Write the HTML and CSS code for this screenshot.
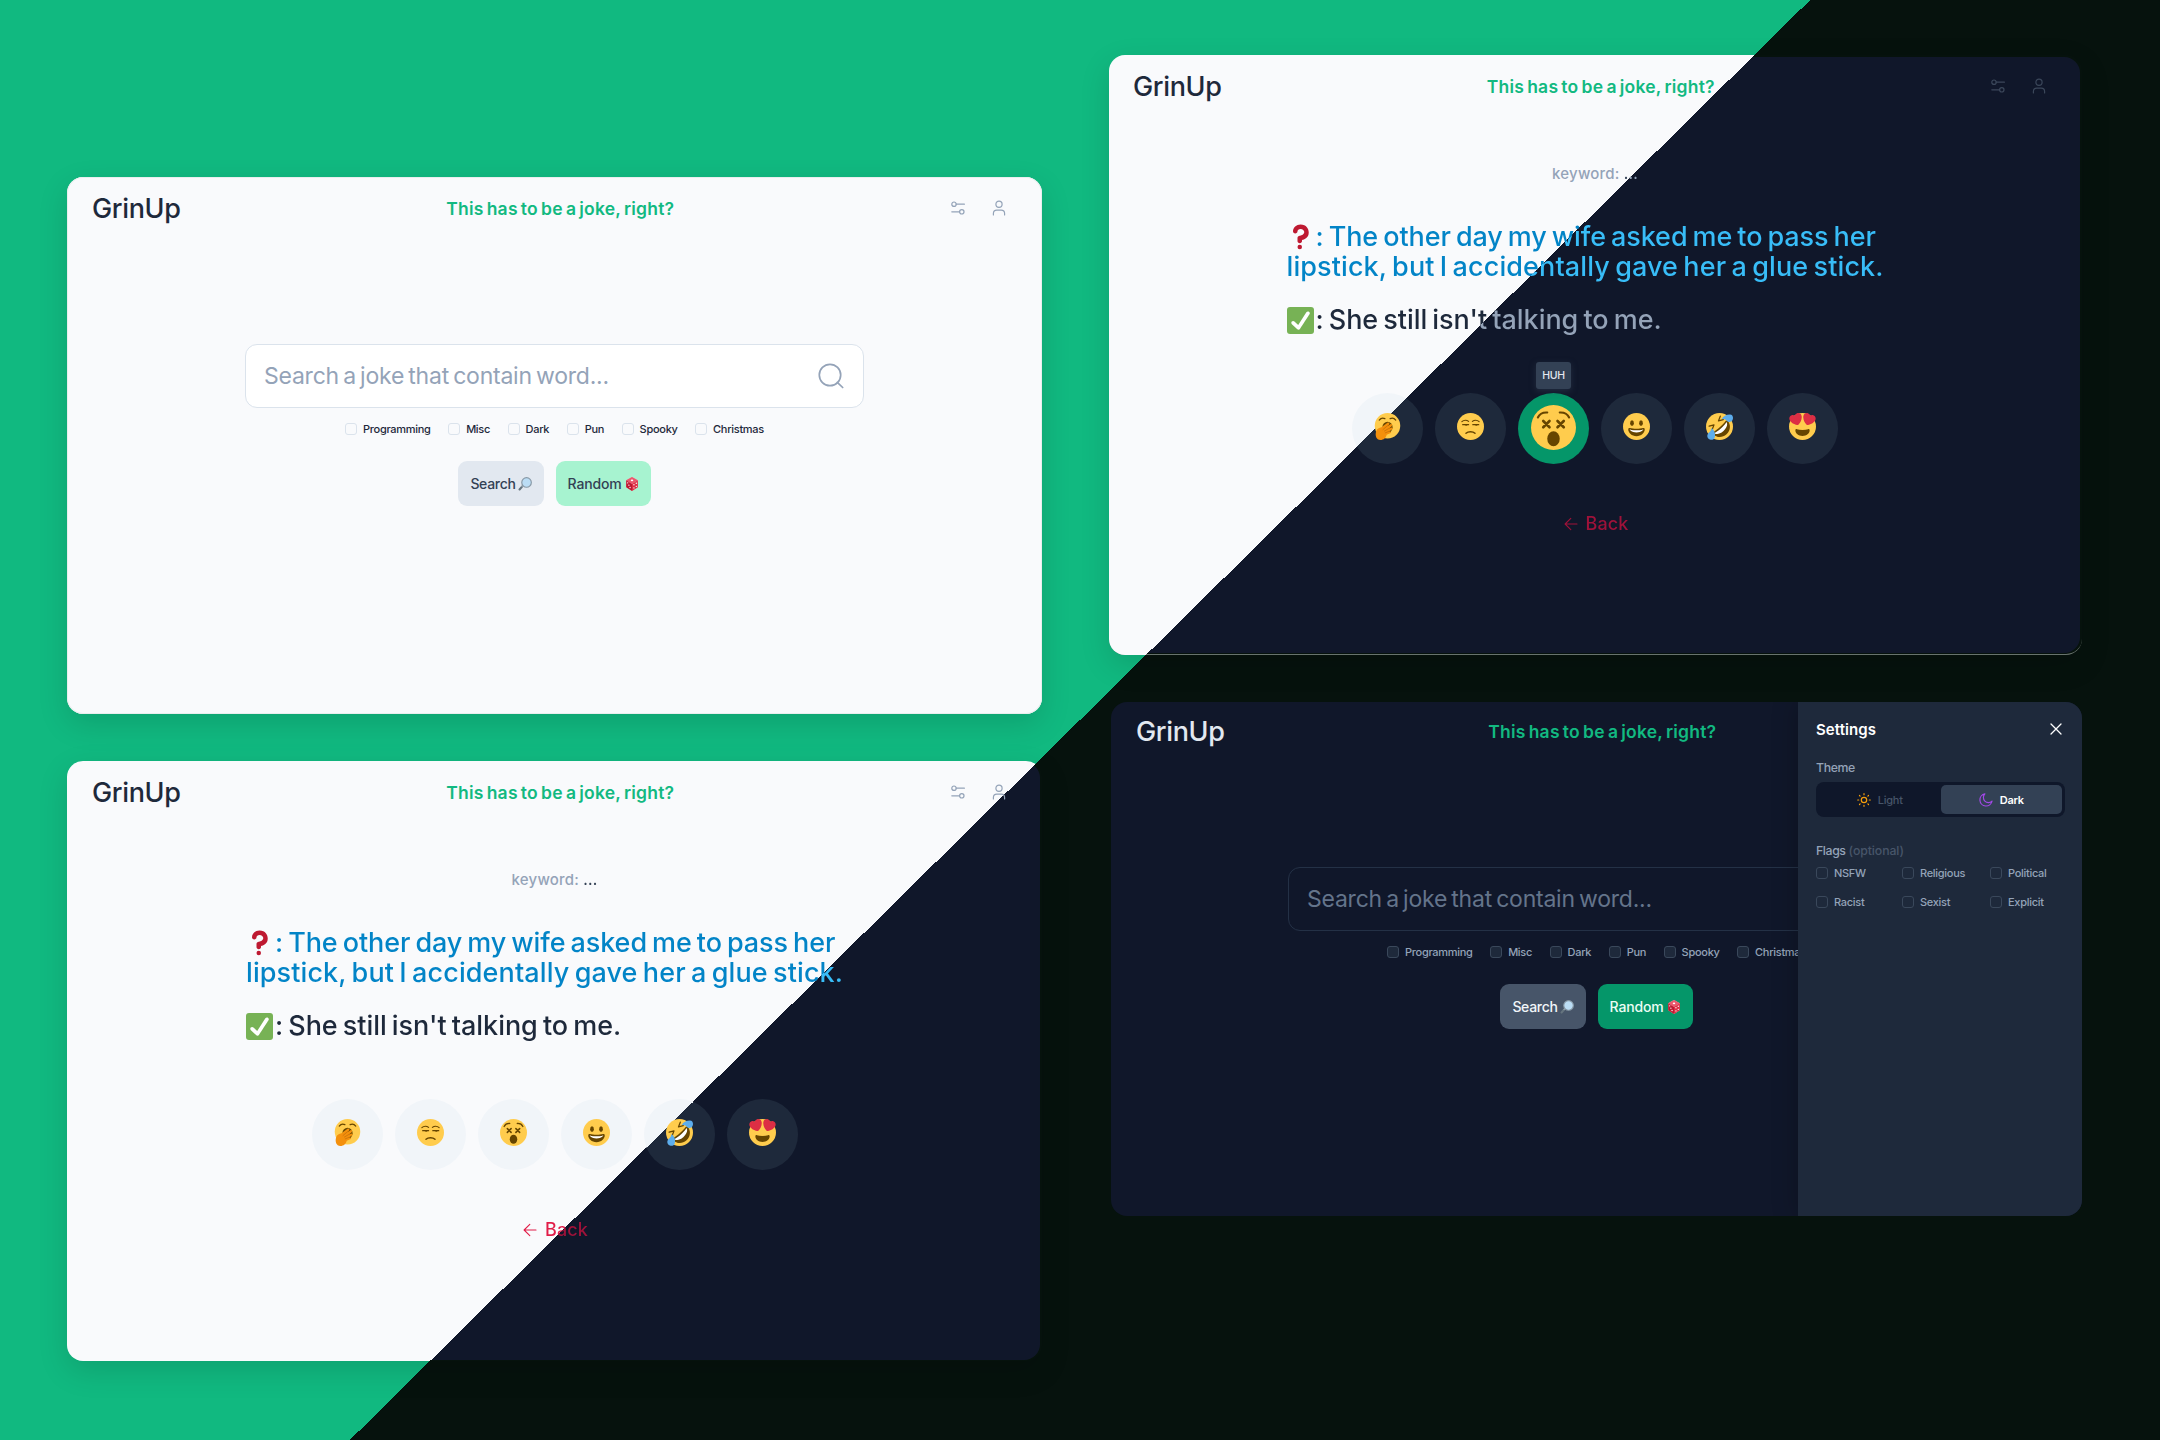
FILE: index.html
```html
<!DOCTYPE html>
<html lang="en">
<head>
<meta charset="utf-8">
<title>GrinUp</title>
<link rel="stylesheet" href="styles.css">
</head>
<body>
<svg class="defs" aria-hidden="true">
  <symbol id="i-sliders" viewBox="0 0 14 14"><g fill="none" stroke="currentColor" stroke-width="1.2" stroke-linecap="round"><circle cx="3" cy="3.2" r="2.2"/><path d="M5.200 3.200h8.200M.8 10.800h7.800"/><circle cx="10.800" cy="10.800" r="2.200"/></g></symbol>
  <symbol id="i-user" viewBox="0 0 14 16"><g fill="none" stroke="currentColor" stroke-width="1.2" stroke-linecap="round"><circle cx="7" cy="4.200" r="3.100"/><path d="M1.400 15v-1.400a3.400 3.400 0 0 1 3.400-3.400h4.400a3.400 3.400 0 0 1 3.400 3.400V15"/></g></symbol>
  <symbol id="i-search" viewBox="0 0 26 26"><g fill="none" stroke="currentColor" stroke-width="1.700" stroke-linecap="round"><circle cx="12" cy="12" r="10.700"/><path d="M19.300 19.300l5.400 5.200"/></g></symbol>
  <symbol id="i-back" viewBox="0 0 14 14"><path fill="none" stroke="currentColor" stroke-width="1.100" stroke-linecap="round" stroke-linejoin="round" d="M13 7H1.200M6.800 1.300L1.100 7l5.700 5.700"/></symbol>
  <symbol id="i-close" viewBox="0 0 12 12"><path fill="none" stroke="currentColor" stroke-width="1.300" stroke-linecap="round" d="M1 1l10 10M11 1L1 11"/></symbol>
  <symbol id="i-sun" viewBox="0 0 14 14"><g fill="none" stroke="#f59e0b" stroke-width="1.200" stroke-linecap="round"><circle cx="7" cy="7" r="2.700"/><path d="M7 .700v1M7 12.300v1M.700 7h1M12.300 7h1M2.500 2.500l.6.6M10.900 10.900l.6.6M11.500 2.500l-.6.6M3.100 10.900l-.6.6"/></g></symbol>
  <symbol id="i-moon" viewBox="0 0 14 14"><path fill="none" stroke="#a348e8" stroke-width="1.200" stroke-linejoin="round" d="M5.900.900A6.100 6.100 0 1 0 13 8.100 4.900 4.900 0 0 1 5.900.900z"/></symbol>

  <symbol id="e-yawn" viewBox="0 0 36 36">
    <circle cx="18" cy="17" r="17" fill="#FFCC4D"/>
    <path fill="none" stroke="#664500" stroke-width="1.600" stroke-linecap="round" d="M7 9.500c2-2.600 5-3.200 7.500-2M29 9.500c-2-2.600-5-3.200-7.500-2"/>
    <ellipse cx="18" cy="19" rx="6.800" ry="7.500" fill="#664500"/>
    <path fill="#F4900C" d="M3 24c1-3 4-4 7-5l8-6c2-1 3.200.8 2 2.200l-2 2.300 4-2.500c2-1 3 1 1.500 2.500L20 20.500l3-1c2-.4 2.500 1.500 1 2.500l-4 2.500 1.500 0c1.500.3 1.500 2 0 2.500L17 29c-1 4-4 7-8.500 7C3 36 1 30 3 24z"/>
    <path fill="none" stroke="#BF6B0A" stroke-width=".9" stroke-linecap="round" d="M12 22l6-5M14 24l6-3.500M15 26.500l5-2"/>
  </symbol>
  <symbol id="e-unamused" viewBox="0 0 36 36">
    <circle cx="18" cy="18" r="18" fill="#FFCC4D"/>
    <g fill="none" stroke="#664500" stroke-width="1.500" stroke-linecap="round"><path d="M6.500 11.500c2.500-2.300 6.500-2.300 9-.3M20.500 11.200c2.500-2 6.500-2 9 .3M7.500 15.500h8M21 15.500h8" /><path stroke-width="2" d="M12 27c3-2.700 9-2.700 12 0"/></g>
    <path fill="#664500" d="M9.500 15h5c0 2.400-4 2.700-5 0zM23 15h5c0 2.400-4 2.700-5 0z"/>
  </symbol>
  <symbol id="e-dizzy" viewBox="0 0 36 36">
    <circle cx="18" cy="18" r="18" fill="#FFCC4D"/>
    <g fill="none" stroke="#664500" stroke-width="2.100" stroke-linecap="round"><path d="M9.800 12.800l5 5M14.800 12.800l-5 5M21.200 12.800l5 5M26.200 12.800l-5 5"/><path stroke-width="1.700" d="M5.500 10c1.200-2.700 4-4.200 7.500-4M30.500 10c-1.200-2.700-4-4.200-7.500-4"/></g>
    <ellipse cx="18" cy="27" rx="5" ry="6" fill="#664500"/>
  </symbol>
  <symbol id="e-grin" viewBox="0 0 36 36">
    <circle cx="18" cy="18" r="18" fill="#FFCC4D"/>
    <path fill="#664500" d="M18 21c-3.623 0-6.027-.422-9-1-.679-.131-2 0-2 2 0 4 4.595 9 11 9 6.404 0 11-5 11-9 0-2-1.321-2.132-2-2-2.973.578-5.377 1-9 1z"/>
    <path fill="#FFF" d="M9 22s3 1 9 1 9-1 9-1-2 4-9 4-9-4-9-4z"/>
    <ellipse cx="12" cy="13.500" rx="2.500" ry="3.700" fill="#664500"/><ellipse cx="24" cy="13.500" rx="2.500" ry="3.700" fill="#664500"/>
  </symbol>
  <symbol id="e-rofl" viewBox="0 0 36 36">
    <circle cx="18" cy="18" r="18" fill="#FFCC4D"/>
    <g transform="rotate(-42 18 18)">
      <path fill="#664500" d="M18 19c-4 0-8-.4-11-1-.8-.1-2 0-2 2 0 6 5 12 13 12s13-6 13-12c0-2-1.200-2.100-2-2-3 .6-7 1-11 1z"/>
      <path fill="#FFF" d="M7 20s4 1.300 11 1.300S29 20 29 20s-1 6-11 6S7 20 7 20z"/>
      <path fill="none" stroke="#664500" stroke-width="1.700" stroke-linecap="round" stroke-linejoin="round" d="M8 8.500l6 3-6 3M28 8.500l-6 3 6 3"/>
    </g>
    <path fill="#5DADEC" d="M21 8c2-4 6-6 11-6 4 0 5 5 3 8-2.500 3.500-6.500 1.500-8-.5-1.500-1.500-3.500-1.500-6-1.500z"/>
    <path fill="#5DADEC" d="M7.500 20c4 3 5.500 8 4 13-1 3.500-6 3.500-8.500 1-2.500-3-1-6.500 1.500-8.500 2-1.500 2.500-3 3-5.500z"/>
  </symbol>
  <symbol id="e-love" viewBox="0 0 36 36">
    <circle cx="18" cy="18" r="18" fill="#FFCC4D"/>
    <path fill="#664500" d="M18 22.500c-3 0-5.500-.4-7.500-1-1-.2-2 0-2 1.800 0 4 4 7.200 9.500 7.200s9.500-3.200 9.500-7.200c0-1.800-1-2-2-1.800-2 .6-4.500 1-7.500 1z"/>
    <path fill="#DD2E44" d="M16.650 3.281C15.791.85 13.126-.426 10.694.431c-1.476.52-2.521 1.711-2.928 3.104-1.191-.829-2.751-1.100-4.225-.58C1.111 3.813-.167 6.480.692 8.911c.122.344.284.663.472.958 1.951 3.582 7.588 6.100 11.001 6.131 2.637-2.167 5.446-7.665 4.718-11.677-.038-.348-.113-.698-.233-1.042zM19.350 3.281C20.209.85 22.875-.426 25.306.431c1.476.52 2.521 1.711 2.929 3.104 1.191-.829 2.751-1.100 4.225-.58 2.430.858 3.707 3.525 2.850 5.956-.123.344-.284.663-.473.958-1.951 3.582-7.588 6.100-11.002 6.131-2.637-2.167-5.445-7.665-4.717-11.677.037-.348.112-.698.232-1.042z"/>
  </symbol>
  <symbol id="e-lens" viewBox="0 0 36 36">
    <path stroke="#66757F" stroke-width="5.500" stroke-linecap="round" d="M4 32l7-8"/><path stroke="#9AAAB4" stroke-width="3" d="M9.500 25.500l4-4.500"/>
    <circle cx="22" cy="14" r="12.300" fill="#BBDDF5" stroke="#8899A6" stroke-width="3"/>
  </symbol>
  <symbol id="e-die" viewBox="0 0 36 36">
    <path fill="#F4ABBA" d="M18 0l15 8.500v18L18 36 3 26.500v-18z"/>
    <path fill="#EA596E" d="M18 0l15 8.500L18 18 3 8.500z"/><path fill="#BE1931" d="M3 8.500L18 18v18L3 26.500z"/><path fill="#DD2E44" d="M33 8.500L18 18v18l15-9.500z"/>
    <g fill="#FFF"><ellipse cx="18" cy="8.500" rx="3.200" ry="2.200"/><circle cx="7" cy="15" r="1.700"/><circle cx="13" cy="27" r="1.700"/><circle cx="10" cy="21" r="1.700"/><circle cx="23" cy="20" r="1.800"/><circle cx="29" cy="16" r="1.800"/><circle cx="23" cy="28" r="1.800"/><circle cx="29" cy="24" r="1.800"/></g>
  </symbol>
  <symbol id="e-question" viewBox="0 0 36 36">
    <path fill="#BE1931" d="M17 27c-1.657 0-3-1.343-3-3v-4c0-1.657 1.343-3 3-3 .603-.006 6-1 6-5 0-2-2-4-5-4-2.441 0-4 2-4 3 0 1.657-1.343 3-3 3s-3-1.343-3-3c0-4.878 4.580-9 10-9 8 0 11 5.982 11 11 0 4.145-2.277 7.313-6.413 8.920-.9.351-1.790.587-2.587.747V24c0 1.657-1.343 3-3 3z"/><circle cx="17" cy="32" r="3" fill="#BE1931"/>
  </symbol>
  <symbol id="e-check" viewBox="0 0 36 36">
    <rect width="36" height="36" rx="4" fill="#77B255"/>
    <path fill="#FFF" d="M29.280 6.362c-1.156-.751-2.704-.422-3.458.736L14.936 23.877l-5.029-4.650c-1.014-.938-2.596-.875-3.533.138-.937 1.014-.875 2.596.139 3.533l7.209 6.666c.48.445 1.090.665 1.696.665.673 0 1.534-.282 2.099-1.139.332-.506 12.500-19.270 12.500-19.270.751-1.159.421-2.707-.737-3.458z"/>
  </symbol>
</svg>

<main class="canvas">
  <section class="card home-light">
    <header class="bar">
      <div class="brand">GrinUp</div>
      <div class="tagline">This has to be a joke, right?</div>
      <nav class="tools"><span class="tool"><svg class="sliders"><use href="#i-sliders"/></svg></span><span class="tool"><svg class="user"><use href="#i-user"/></svg></span></nav>
    </header>
    <div class="home">
      <div class="search"><span class="placeholder">Search a joke that contain word...</span><svg class="glass"><use href="#i-search"/></svg></div>
      <div class="checks">
        <label class="check"><i class="box"></i><span>Programming</span></label>
        <label class="check"><i class="box"></i><span>Misc</span></label>
        <label class="check"><i class="box"></i><span>Dark</span></label>
        <label class="check"><i class="box"></i><span>Pun</span></label>
        <label class="check"><i class="box"></i><span>Spooky</span></label>
        <label class="check"><i class="box"></i><span>Christmas</span></label>
      </div>
      <div class="actions">
        <div class="btn plain"><span>Search</span><svg class="mini"><use href="#e-lens"/></svg></div>
        <div class="btn lucky"><span>Random</span><svg class="mini"><use href="#e-die"/></svg></div>
      </div>
    </div>
  </section>

  <section class="card joke-card joke-low">
    <header class="bar">
      <div class="brand">GrinUp</div>
      <div class="tagline">This has to be a joke, right?</div>
      <nav class="tools"><span class="tool"><svg class="sliders"><use href="#i-sliders"/></svg></span><span class="tool"><svg class="user"><use href="#i-user"/></svg></span></nav>
    </header>
    <div class="joke">
      <p class="keyword"><span>keyword:</span> <b class="split dots">...</b></p>
      <div class="lines">
        <p class="setup split"><span class="line first"><svg class="mark"><use href="#e-question"/></svg><span>: The other day my wife asked me to pass her</span></span><span class="line second">lipstick, but I accidentally gave her a glue stick.</span></p>
        <p class="punch split"><span class="line"><svg class="mark"><use href="#e-check"/></svg><span>: She still isn't talking to me.</span></span></p>
      </div>
      <div class="moods">
        <span class="mood"><svg class="face"><use href="#e-yawn"/></svg></span>
        <span class="mood"><svg class="face"><use href="#e-unamused"/></svg></span>
        <span class="mood"><svg class="face"><use href="#e-dizzy"/></svg></span>
        <span class="mood"><svg class="face"><use href="#e-grin"/></svg></span>
        <span class="mood"><svg class="face"><use href="#e-rofl"/></svg></span>
        <span class="mood"><svg class="face"><use href="#e-love"/></svg></span>
      </div>
      <div class="back"><svg class="arrow"><use href="#i-back"/></svg><span class="split">Back</span></div>
    </div>
  </section>

  <section class="card joke-card joke-high">
    <header class="bar">
      <div class="brand">GrinUp</div>
      <div class="tagline">This has to be a joke, right?</div>
      <nav class="tools"><span class="tool"><svg class="sliders"><use href="#i-sliders"/></svg></span><span class="tool"><svg class="user"><use href="#i-user"/></svg></span></nav>
    </header>
    <div class="joke">
      <p class="keyword"><span>keyword:</span> <b class="split dots">...</b></p>
      <div class="lines">
        <p class="setup split"><span class="line first"><svg class="mark"><use href="#e-question"/></svg><span>: The other day my wife asked me to pass her</span></span><span class="line second">lipstick, but I accidentally gave her a glue stick.</span></p>
        <p class="punch split"><span class="line"><svg class="mark"><use href="#e-check"/></svg><span>: She still isn't talking to me.</span></span></p>
      </div>
      <div class="moods">
        <span class="mood"><svg class="face"><use href="#e-yawn"/></svg></span>
        <span class="mood"><svg class="face"><use href="#e-unamused"/></svg></span>
        <span class="mood active"><span class="tip">HUH</span><svg class="face"><use href="#e-dizzy"/></svg></span>
        <span class="mood"><svg class="face"><use href="#e-grin"/></svg></span>
        <span class="mood"><svg class="face"><use href="#e-rofl"/></svg></span>
        <span class="mood"><svg class="face"><use href="#e-love"/></svg></span>
      </div>
      <div class="back"><svg class="arrow"><use href="#i-back"/></svg><span class="split">Back</span></div>
    </div>
  </section>

  <section class="card home-dark">
    <div class="page">
      <header class="bar">
        <div class="brand">GrinUp</div>
        <div class="tagline">This has to be a joke, right?</div>
        <nav class="tools"><span class="tool"></span><span class="tool"></span></nav>
      </header>
      <div class="home">
        <div class="search"><span class="placeholder">Search a joke that contain word...</span></div>
        <div class="checks">
          <label class="check"><i class="box"></i><span>Programming</span></label>
          <label class="check"><i class="box"></i><span>Misc</span></label>
          <label class="check"><i class="box"></i><span>Dark</span></label>
          <label class="check"><i class="box"></i><span>Pun</span></label>
          <label class="check"><i class="box"></i><span>Spooky</span></label>
          <label class="check"><i class="box"></i><span>Christmas</span></label>
        </div>
        <div class="actions">
          <div class="btn plain"><span>Search</span><svg class="mini"><use href="#e-lens"/></svg></div>
          <div class="btn lucky"><span>Random</span><svg class="mini"><use href="#e-die"/></svg></div>
        </div>
      </div>
    </div>
    <aside class="settings">
      <div class="settings-head"><h2 class="settings-title">Settings</h2><svg class="close"><use href="#i-close"/></svg></div>
      <h3 class="label"><span>Theme</span></h3>
      <div class="toggle">
        <div class="option"><svg class="glyph"><use href="#i-sun"/></svg><span>Light</span></div>
        <div class="option on"><svg class="glyph"><use href="#i-moon"/></svg><span>Dark</span></div>
      </div>
      <h3 class="label flags-label"><span>Flags</span><span class="hint">(optional)</span></h3>
      <div class="flags">
        <label class="check"><i class="box"></i><span>NSFW</span></label>
        <label class="check"><i class="box"></i><span>Religious</span></label>
        <label class="check"><i class="box"></i><span>Political</span></label>
        <label class="check"><i class="box"></i><span>Racist</span></label>
        <label class="check"><i class="box"></i><span>Sexist</span></label>
        <label class="check"><i class="box"></i><span>Explicit</span></label>
      </div>
    </aside>
  </section>
</main>
</body>
</html>
```
FILE: styles.css
```css
* { box-sizing: border-box; }

:root {
  --edge: 135.4deg;
}

body {
  margin: 0;
  font-family: Inter, "Open Sans", sans-serif;
  font-weight: 500;
  background: #05120c;
}

p, h2, h3 { margin: 0; font-weight: 500; }
svg { display: block; flex: none; }
.defs { position: absolute; width: 0; height: 0; }

.canvas {
  position: relative;
  width: 2160px;
  height: 1440px;
  overflow: hidden;
  background: linear-gradient(var(--edge), #11b980 50%, #06120d 50%);
}

/* Screens laid out freely on the canvas */
.card {
  position: absolute;
  width: 975px;
  isolation: isolate;
  color: #1e293b;
}

.home-light {
  left: 67px; top: 177px; height: 537px;
  border-radius: 16px;
  background: #f9fafc;
  box-shadow: inset 0 0 0 1px #e9eeee, 0 10px 30px rgba(0, 0, 0, .13);
}
.joke-low { left: 67px; top: 761px; height: 600px; }
.joke-high { left: 1109px; top: 55px; width: 973px; height: 600px; border-radius: 16px; border-bottom: 1px solid #68736d; }
.home-dark {
  left: 1111px; top: 702px; width: 971px; height: 514px;
  border-radius: 16px;
  overflow: hidden;
  background: #10172a;
}

/* Light half and dark half of the divided screens */
.joke-card::before, .joke-card::after {
  content: "";
  position: absolute;
  z-index: -1;
  border-radius: 16px;
}
.joke-card::before {
  inset: 0 0 -1px 0;
  background: linear-gradient(var(--edge), #f9fafc 50%, transparent 50%) fixed;
  box-shadow: 0 10px 30px rgba(0, 0, 0, .13);
}
.joke-card::after {
  inset: 1px 2px 1px 2px;
  background: linear-gradient(var(--edge), transparent 50%, #10172a 50%) fixed;
}
.joke-low::before { bottom: 0; }
.joke-high::after { top: 2px; }

.split {
  color: transparent;
  background: linear-gradient(var(--edge), var(--day) 50%, var(--night) 50%) fixed;
  background-clip: text;
  -webkit-background-clip: text;
}

.bar {
  display: flex;
  align-items: center;
  justify-content: space-between;
  height: 64px;
  padding: 0 26px 0 25px;
}
.joke-high .bar { padding-left: 24px; }
.brand { font-size: 27px; line-height: 36px; letter-spacing: -.37px; }
.tagline { margin-top: -1px; font-size: 17.500px; font-weight: 600; letter-spacing: .22px; word-spacing: -1.500px; color: #12b981; }
.tools { display: flex; gap: 6px; margin-top: -3px; color: #94a3b8; }
.tool { display: flex; width: 35px; height: 35px; align-items: center; justify-content: center; }
.joke-high .tools { color: #3b475a; }
.sliders { width: 14px; height: 14px; }
.user { width: 14px; height: 16px; }

.home { display: flex; flex-direction: column; align-items: center; padding-top: 103px; }
.search {
  display: flex;
  align-items: center;
  justify-content: space-between;
  width: 619px;
  height: 64px;
  padding: 0 19px 0 18px;
  border: 1px solid #dbe3ec;
  border-radius: 12px;
  background: #fff;
  color: #94a3b8;
}
.placeholder { font-size: 23px; font-weight: 400; letter-spacing: -.23px; word-spacing: -2px; }
.glass { width: 26px; height: 26px; }
.checks { display: flex; gap: 17.500px; margin-top: 13px; }
.check { display: flex; align-items: center; gap: 6px; height: 15px; font-size: 11px; letter-spacing: -.29px; white-space: nowrap; }
.box { width: 12px; height: 12px; flex: none; border: 1px solid #dbe3ec; border-radius: 3px; }
.actions { display: flex; gap: 12px; margin-top: 25px; }
.btn { display: flex; align-items: center; height: 45px; padding: 0 12px; gap: 2px; border-radius: 9px; font-size: 14px; letter-spacing: -.3px; color: #334155; }
.plain { background: #e2e8f0; }
.lucky { background: #a7f3d0; gap: 3px; letter-spacing: -.15px; }
.mini { width: 14px; height: 14px; }

.joke { display: flex; flex-direction: column; align-items: center; padding-top: 45px; }
.joke-high .joke { padding-right: 1px; }
.keyword { font-size: 15px; line-height: 20px; letter-spacing: .2px; color: #94a3b8; }
.dots { font-weight: 500; --day: #334155; --night: #94a3b8; }
.lines { width: 617px; margin-top: 38px; font-size: 27px; line-height: 29.700px; letter-spacing: -.05px; word-spacing: -2px; white-space: nowrap; }
.setup { padding-bottom: 8px; --day: #0284c7; --night: #38bdf8; }
.punch { padding-bottom: 8px; --day: #1e293b; --night: #94a3b8; margin-top: 16px; }
.line { display: flex; align-items: center; }
.first { letter-spacing: -.1px; }
.second { letter-spacing: .1px; }
.mark { width: 27px; height: 27px; margin-right: 2px; }
.moods { display: flex; gap: 12px; margin-top: 50px; }
.mood {
  position: relative;
  display: flex;
  align-items: center;
  justify-content: center;
  width: 71px;
  height: 71px;
  border-radius: 50%;
  padding-bottom: 4px;
  background: linear-gradient(var(--edge), #f1f5f9 50%, #1e293b 50%) fixed;
}
.face { width: 27px; height: 27px; }
.active { background: #059669; padding-bottom: 2px; }
.active .face { width: 45px; height: 45px; }
.tip {
  position: absolute;
  left: 18px; top: -31px;
  width: 35px;
  height: 27px;
  border-radius: 3px;
  background: #334155;
  color: #e2e8f0;
  font-size: 10.500px;
  line-height: 27px;
  letter-spacing: -.3px;
  text-align: center;
  box-shadow: 0 2px 6px rgba(51, 65, 85, .5);
}
.back { display: flex; align-items: center; gap: 8px; margin-top: 48px; padding-left: 2px; font-size: 18px; line-height: 24px; letter-spacing: .1px; color: #e11d48; --day: #e11d48; --night: #9f1239; }
.arrow { width: 14px; height: 14px; }
.joke-high .back { color: #9f1239; }

.home-dark .page { width: 971px; height: 514px; margin-top: -2px; }
.home-dark .search { width: 617px; background: transparent; border-color: #243146; color: #64748b; }
.home-dark .brand { color: #e2e8f0; }
.home-dark .check { color: #94a3b8; }
.home-dark .box { background: #1e293b; border-color: #3a485b; }
.home-dark .plain { background: #475569; color: #f1f5f9; }
.home-dark .lucky { background: #059669; color: #ecfdf5; }

.settings {
  position: absolute;
  top: 0; right: 0;
  width: 284px;
  height: 514px;
  padding: 17px 17px 0 18px;
  background: #1e293b;
  box-shadow: 0 0 24px rgba(0, 0, 0, .25);
  color: #94a3b8;
}
.settings-head { display: flex; align-items: center; justify-content: space-between; height: 20px; padding-right: 3px; color: #fff; }
.settings-title { font-size: 15px; font-weight: 600; letter-spacing: .06px; }
.close { width: 12px; height: 12px; }
.label { display: flex; gap: 3px; margin-top: 21px; font-size: 12.300px; line-height: 16px; letter-spacing: -.4px; }
.toggle { display: flex; height: 35px; margin-top: 6px; padding: 3px; border-radius: 8px; background: #0f172a; }
.option { display: flex; flex: 1; align-items: center; justify-content: center; gap: 7px; font-size: 11px; letter-spacing: -.25px; color: #475569; border-radius: 5px; }
.on { background: #334155; color: #fff; font-weight: 600; }
.glyph { width: 14px; height: 14px; }
.flags-label { margin-top: 26px; }
.hint { color: #475569; letter-spacing: -.1px; }
.flags { display: grid; grid-template-columns: 86px 88px 1fr; row-gap: 14.500px; margin-top: 6px; }
```
